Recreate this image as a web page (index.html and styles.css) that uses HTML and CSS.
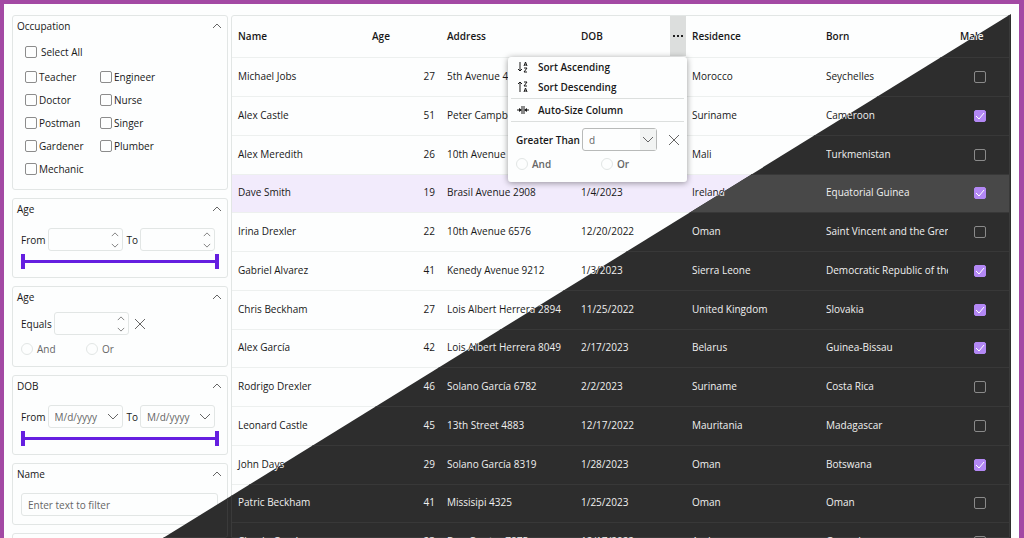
FILE: index.html
```html
<!DOCTYPE html>
<html lang="en">
    <head>
        <meta charset="utf-8">
        <title>Filter Panel</title>
        <link rel="stylesheet" href="styles.css">
    </head>
    <body>
        <svg class="symbols" aria-hidden="true">
            <symbol id="up" viewBox="0 0 10 6"><path d="M1 5 5 1l4 4"/></symbol>
            <symbol id="down" viewBox="0 0 10 6"><path d="M1 1l4 4 4-4"/></symbol>
            <symbol id="open" viewBox="0 0 12 7"><path d="M1 1l5 5 5-5"/></symbol>
            <symbol id="cross" viewBox="0 0 10 10"><path d="M0 0l10 10M10 0 0 10"/></symbol>
        </svg>
        <div class="frame">
            <div class="app" id="app">
                <aside class="sidebar">
                    <section class="panel occupation">
                        <h2>Occupation <button class="icon-btn" aria-label="Collapse"><svg class="chevron"><use href="#up"/></svg></button></h2>
                        <label class="check select-all"><input type="checkbox">Select All</label>
                        <div class="check-list">
                            <label class="check"><input type="checkbox">Teacher</label>
                            <label class="check"><input type="checkbox">Engineer</label>
                            <label class="check"><input type="checkbox">Doctor</label>
                            <label class="check"><input type="checkbox">Nurse</label>
                            <label class="check"><input type="checkbox">Postman</label>
                            <label class="check"><input type="checkbox">Singer</label>
                            <label class="check"><input type="checkbox">Gardener</label>
                            <label class="check"><input type="checkbox">Plumber</label>
                            <label class="check"><input type="checkbox">Mechanic</label>
                        </div>
                    </section>
                    <section class="panel">
                        <h2>Age <button class="icon-btn" aria-label="Collapse"><svg class="chevron"><use href="#up"/></svg></button></h2>
                        <div class="fields">
                            <label>From <span class="field"><input type="text"><span class="spin"><svg><use href="#up"/></svg><svg><use href="#down"/></svg></span></span></label>
                            <label>To <span class="field"><input type="text"><span class="spin"><svg><use href="#up"/></svg><svg><use href="#down"/></svg></span></span></label>
                        </div>
                        <div class="range"></div>
                    </section>
                    <section class="panel compare">
                        <h2>Age <button class="icon-btn" aria-label="Collapse"><svg class="chevron"><use href="#up"/></svg></button></h2>
                        <div class="fields">
                            <label>Equals <span class="field"><input type="text"><span class="spin"><svg><use href="#up"/></svg><svg><use href="#down"/></svg></span></span></label>
                            <button class="icon-btn" aria-label="Clear"><svg class="cross"><use href="#cross"/></svg></button>
                        </div>
                        <div class="radios">
                            <label><input type="radio" disabled>And</label>
                            <label><input type="radio" disabled>Or</label>
                        </div>
                    </section>
                    <section class="panel">
                        <h2>DOB <button class="icon-btn" aria-label="Collapse"><svg class="chevron"><use href="#up"/></svg></button></h2>
                        <div class="fields">
                            <label>From <span class="field"><input type="text" placeholder="M/d/yyyy"><svg class="open"><use href="#open"/></svg></span></label>
                            <label>To <span class="field"><input type="text" placeholder="M/d/yyyy"><svg class="open"><use href="#open"/></svg></span></label>
                        </div>
                        <div class="range"></div>
                    </section>
                    <section class="panel">
                        <h2>Name <button class="icon-btn" aria-label="Collapse"><svg class="chevron"><use href="#up"/></svg></button></h2>
                        <div class="fields">
                            <span class="field wide"><input type="text" placeholder="Enter text to filter" aria-label="Name"></span>
                        </div>
                    </section>
                    <section class="panel"></section>
                </aside>
                <main class="grid">
                    <table>
                        <colgroup>
                            <col class="col-text"><col class="col-age"><col class="col-text"><col class="col-dob"><col class="col-text"><col class="col-text"><col class="col-male">
                        </colgroup>
                        <thead>
                            <tr>
                                <th>Name</th>
                                <th>Age</th>
                                <th>Address</th>
                                <th class="dob"><div>DOB <button class="more" aria-label="Column menu"><i></i><i></i><i></i></button></div></th>
                                <th>Residence</th>
                                <th>Born</th>
                                <th>Male</th>
                            </tr>
                        </thead>
                        <tbody id="rows"></tbody>
                    </table>
                    <div class="menu">
                        <button class="item">
                            <svg viewBox="0 0 12 12"><path d="M3 1v9M1 8l2 2 2-2M7 5l1.5-4L10 5M7.5 4h2M7 7h3l-3 4h3"/></svg>
                            Sort Ascending
                        </button>
                        <button class="item">
                            <svg viewBox="0 0 12 12"><path d="M3 11V1M1 3l2-2 2 2M7 1h3L7 5h3M7 11l1.5-4 1.5 4M7.5 10h2"/></svg>
                            Sort Descending
                        </button>
                        <hr>
                        <button class="item">
                            <svg viewBox="0 0 12 12"><path d="M5 2v8M7 2v8M0 6h4M8 6h4"/><path class="solid" d="M2 4l3 2-3 2zM10 4 7 6l3 2z"/></svg>
                            Auto-Size Column
                        </button>
                        <hr>
                        <div class="fields">
                            <label>Greater Than <span class="field"><input type="text" value="d"><span class="drop"><svg class="open"><use href="#open"/></svg></span></span></label>
                            <button class="icon-btn" aria-label="Clear"><svg class="cross"><use href="#cross"/></svg></button>
                        </div>
                        <div class="radios">
                            <label><input type="radio" disabled>And</label>
                            <label><input type="radio" disabled>Or</label>
                        </div>
                    </div>
                </main>
            </div>
        </div>
        <script src="script.js"></script>
    </body>
</html>
```
FILE: styles.css
```css
*{
    box-sizing:border-box;
}
body{
    margin:0;
    font-family:"Open Sans","Noto Sans",sans-serif;
    font-size:10px;
    line-height:16px;
}
button,input{
    font:inherit;
    color:inherit;
}
.symbols{
    display:none;
}
svg{
    flex:none;
    fill:none;
    stroke:currentColor;
}
.frame{
    position:relative;
    height:100vh;
    overflow:hidden;
    border:solid #a349a4;
    border-width:4px 5px 0 4px;
    background-color:#fefefe;
}
/* themes */
.app{
    --bg:#fdfefe;
    --text:#181818;
    --muted:#666;
    --line:#e2e6e5;
    --row-line:#edf0ef;
    --box:#8c8c8c;
    --selected:#f2ebfc;
    display:flex;
    gap:3px;
    padding:11px 9px 0 8px;
    background-color:var(--bg);
    color:var(--text);
}
/* dark copy shown below the diagonal */
.app.dark{
    --bg:#2d2d2d;
    --text:#f0f0f0;
    --muted:#a0a0a0;
    --line:#3a3a3a;
    --row-line:#383838;
    --box:#8a8a8a;
    --selected:#484848;
    position:absolute;
    inset:0;
    clip-path:polygon(calc(100% - 8px) 10px,calc(100% - 8px) 100%,159px 100%);
}
.sidebar{
    flex:0 0 216px;
    min-width:0;
    display:flex;
    flex-direction:column;
    gap:8px;
}
.panel{
    min-height:62px;
    padding:2px 9px 0 8px;
    border:1px solid var(--line);
    border-radius:3px;
}
.occupation{
    height:175px;
}
.panel h2{
    display:flex;
    justify-content:space-between;
    align-items:center;
    margin:0 -4px 11px;
    font-size:10px;
    font-weight:400;
}
.occupation h2{
    margin-bottom:10px;
}
.compare h2{
    margin-bottom:7px;
}
.icon-btn{
    display:flex;
    padding:0;
    border:none;
    background:none;
    color:var(--muted);
}
.chevron{
    width:10px;
    height:6px;
}
.open{
    width:12px;
    height:7px;
}
.cross{
    width:10px;
    height:10px;
}
.check{
    display:flex;
    align-items:center;
    gap:2px;
}
.select-all{
    gap:4px;
    margin:0 4px 9px;
}
.check-list{
    display:grid;
    grid-template-columns:75px 75px;
    row-gap:7px;
    margin-left:4px;
}
input[type="checkbox"]{
    appearance:none;
    width:12px;
    height:12px;
    margin:0;
    border:1px solid var(--box);
    border-radius:2px;
}
input[type="checkbox"]:checked{
    border-color:#b388f5;
    background:#b388f5 url("data:image/svg+xml,%3Csvg xmlns='http://www.w3.org/2000/svg' viewBox='0 0 12 12'%3E%3Cpath d='M2 6l3 3 5-6' fill='none' stroke='white'/%3E%3C/svg%3E") center/12px;
}
.fields{
    display:flex;
    align-items:center;
    gap:4px;
}
.fields label{
    display:flex;
    align-items:center;
    gap:2px;
    white-space:nowrap;
}
.fields .icon-btn{
    margin-left:2px;
}
.field{
    display:flex;
    align-items:center;
    justify-content:space-between;
    width:75px;
    height:23px;
    padding-right:3px;
    border:1px solid var(--line);
    border-radius:3px;
    color:var(--muted);
}
.field input{
    flex:1;
    min-width:0;
    padding:0 0 0 6px;
    border:none;
    outline:none;
    background:none;
}
.field input::placeholder{
    color:var(--muted);
}
.field.wide{
    width:100%;
}
.spin{
    display:flex;
    flex-direction:column;
    gap:6px;
}
.spin svg{
    width:8px;
    height:5px;
}
/* range slider with both thumbs at the ends */
.range{
    height:15px;
    margin:3px -1px 8px 0;
    border:solid #651fe0;
    border-width:0 4px;
    background:linear-gradient(#651fe0,#651fe0) center/100% 3px no-repeat;
}
.radios{
    display:grid;
    grid-template-columns:65px 65px;
    margin:6px 0 9px;
    color:var(--muted);
}
.radios label{
    display:flex;
    align-items:center;
    gap:4px;
}
input[type="radio"]{
    appearance:none;
    width:12px;
    height:12px;
    margin:0;
    border:1px solid var(--line);
    border-radius:50%;
}
/* grid */
.grid{
    position:relative;
    flex:1;
    min-width:0;
    border:1px solid var(--line);
    border-radius:3px 0 0 0;
}
table{
    width:100%;
    table-layout:fixed;
    border-collapse:collapse;
}
.col-text{
    width:134px;
}
.col-age{
    width:75px;
}
.col-dob{
    width:111px;
}
.col-male{
    width:55px;
}
th,td{
    height:39px;
    padding:0 6px 2px;
    border-bottom:1px solid var(--row-line);
    text-align:left;
    white-space:nowrap;
}
tr:nth-child(4n) td{
    height:38px;
}
th{
    height:41px;
    padding-bottom:0;
    font-weight:600;
}
th.dob{
    padding-right:0;
}
th.dob div{
    display:flex;
    align-items:center;
    justify-content:space-between;
}
.more{
    display:flex;
    align-items:center;
    justify-content:center;
    gap:2px;
    width:16px;
    height:40px;
    padding:0;
    border:none;
    background-color:#dcdedd;
}
.more i{
    width:2px;
    height:2px;
    background-color:#202020;
}
td div{
    overflow:hidden;
}
td.age{
    text-align:right;
}
td.male{
    padding-right:9px;
    text-align:center;
}
td.male input{
    vertical-align:middle;
}
tr.selected td{
    background-color:var(--selected);
}
/* column menu */
.menu{
    position:absolute;
    top:41px;
    left:276px;
    width:179px;
    padding:0 3px;
    border-radius:3px;
    background-color:#fdfefe;
    box-shadow:0 1px 6px rgba(0,0,0,0.4);
    font-weight:600;
}
.item{
    display:flex;
    align-items:center;
    gap:9px;
    width:100%;
    height:20px;
    padding:0 6px;
    border:none;
    background:none;
}
.item svg{
    width:12px;
    height:12px;
}
.item .solid{
    fill:currentColor;
    stroke:none;
}
.menu hr{
    margin:1px 0;
    border:none;
    border-top:1px solid #dcdfde;
}
.menu .fields{
    margin:6px 5px 0;
}
.menu .field{
    padding-right:0;
    border-color:#b8bab9;
    font-weight:400;
}
.menu .icon-btn{
    margin-left:8px;
}
.drop{
    display:flex;
    align-items:center;
    height:21px;
    padding:0 2px;
    background-color:#f2f4f3;
}
.menu .radios{
    grid-template-columns:85px 65px;
    margin:5px 5px 10px;
}
```
FILE: script.js
```js
const people = [
    ['Michael Jobs', 27, '5th Avenue 4782', '1/12/2023', 'Morocco', 'Seychelles', false],
    ['Alex Castle', 51, 'Peter Campbell 12', '2/8/2023', 'Suriname', 'Cameroon', true],
    ['Alex Meredith', 26, '10th Avenue 1290', '1/9/2023', 'Mali', 'Turkmenistan', false],
    ['Dave Smith', 19, 'Brasil Avenue 2908', '1/4/2023', 'Ireland', 'Equatorial Guinea', true],
    ['Irina Drexler', 22, '10th Avenue 6576', '12/20/2022', 'Oman', 'Saint Vincent and the Grenadines', false],
    ['Gabriel Alvarez', 41, 'Kenedy Avenue 9212', '1/3/2023', 'Sierra Leone', 'Democratic Republic of the Congo', true],
    ['Chris Beckham', 27, 'Lois Albert Herrera 2894', '11/25/2022', 'United Kingdom', 'Slovakia', true],
    ['Alex García', 42, 'Lois Albert Herrera 8049', '2/17/2023', 'Belarus', 'Guinea-Bissau', true],
    ['Rodrigo Drexler', 46, 'Solano García 6782', '2/2/2023', 'Suriname', 'Costa Rica', false],
    ['Leonard Castle', 45, '13th Street 4883', '12/17/2022', 'Mauritania', 'Madagascar', false],
    ['John Days', 29, 'Solano García 8319', '1/28/2023', 'Oman', 'Botswana', true],
    ['Patric Beckham', 41, 'Missisipi 4325', '1/25/2023', 'Oman', 'Oman', false],
    ['Claudo García', 23, 'Don Quntor 7875', '12/17/2022', 'Andorra', 'Grenada', false]
];
const selectedRow = 3;

document.getElementById('rows').innerHTML = people.map((p, i) => `
    <tr class="${i === selectedRow ? 'selected' : ''}">
        <td>${p[0]}</td>
        <td class="age">${p[1]}</td>
        <td>${p[2]}</td>
        <td>${p[3]}</td>
        <td>${p[4]}</td>
        <td><div>${p[5]}</div></td>
        <td class="male"><input type="checkbox" aria-label="Male" ${p[6] ? 'checked' : ''}></td>
    </tr>`).join('');

// dark theme half
const app = document.getElementById('app');
const dark = app.cloneNode(true);
dark.removeAttribute('id');
dark.querySelector('tbody').removeAttribute('id');
dark.querySelector('.menu').remove();
dark.classList.add('dark');
dark.inert = true;
app.after(dark);
```
